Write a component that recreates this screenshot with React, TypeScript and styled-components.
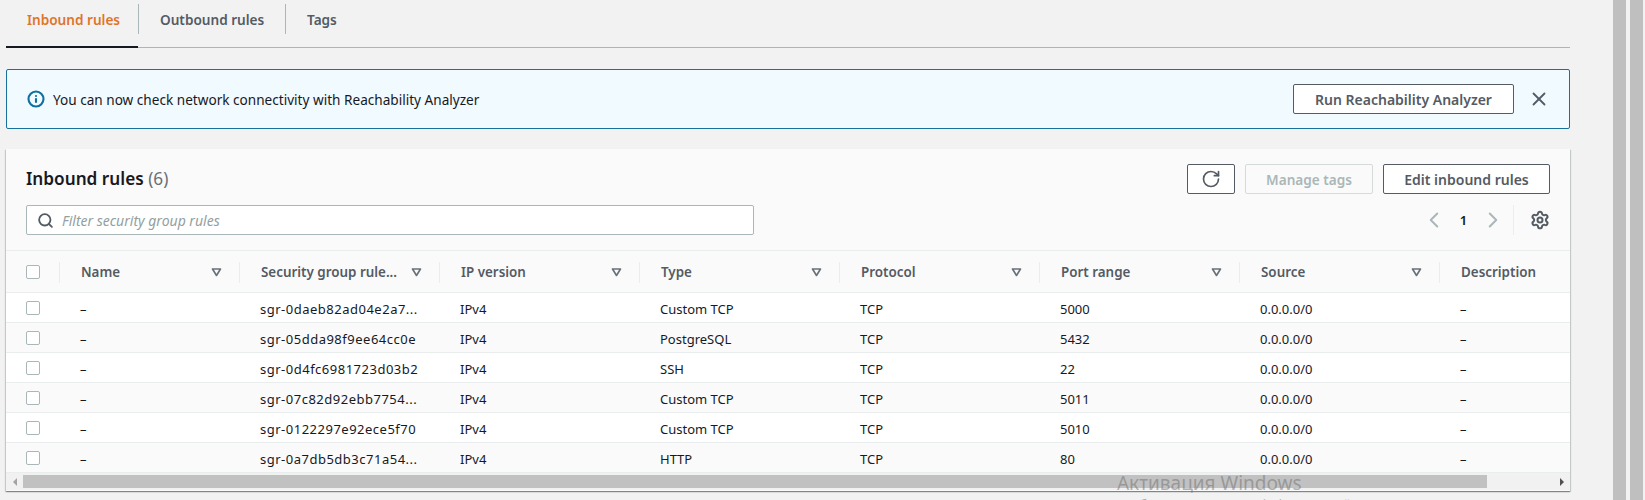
import React from 'react';
import styled, { createGlobalStyle } from 'styled-components';
import { X, RotateCw, ChevronLeft, ChevronRight, Settings, Search, Info } from 'lucide-react';

const GlobalStyle = createGlobalStyle`
  html, body {
    margin: 0;
    padding: 0;
    background: #f2f2f2;
    overflow: hidden;
  }
  body {
    font-family: "Noto Sans", "Open Sans", sans-serif;
    font-size: 14px;
    color: #16191f;
  }
`;

const Page = styled.div`
  position: relative;
  display: flex;
  width: 1645px;
  height: 500px;
  overflow: hidden;
`;

const Content = styled.div`
  width: 1564px;
  margin-left: 6px;
  flex: none;
`;

const Gutter = styled.div`
  display: flex;
  gap: 4px;
  margin-left: 43px;
  flex: none;
`;

const Track = styled.div`
  width: 13px;
  height: 500px;
  background: #bfbfbf;
`;

const Tabs = styled.div`
  display: flex;
  height: 48px;
  border-bottom: 1px solid #aab7b8;
  box-sizing: border-box;
`;

const Tab = styled.div<{ $active?: boolean; $width: number }>`
  box-sizing: border-box;
  width: ${p => p.$width}px;
  height: 48px;
  padding: 10px 0 0 21px;
  font-weight: 600;
  font-size: 13.6px;
  line-height: 20px;
  color: ${p => (p.$active ? '#e0742a' : '#545b64')};
  border-bottom: ${p => (p.$active ? '2px solid #16191f' : 'none')};
`;

const TabSep = styled.div`
  width: 1px;
  height: 30px;
  margin-top: 4px;
  background: #aab7b8;
`;

const Alert = styled.div`
  box-sizing: border-box;
  display: flex;
  align-items: center;
  height: 60px;
  margin-top: 21px;
  padding: 0 19px 0 20px;
  background: #f1faff;
  border: 1px solid #16719c;
  border-radius: 2px;
`;

const AlertText = styled.span`
  margin-left: 8px;
  padding-top: 1px;
  flex: 1;
  font-size: 13.6px;
  line-height: 20px;
`;

const Btn = styled.button<{ $width: number; $disabled?: boolean }>`
  box-sizing: border-box;
  display: flex;
  align-items: center;
  justify-content: center;
  flex: none;
  width: ${p => p.$width}px;
  height: 30px;
  padding: 0;
  font-family: inherit;
  font-size: ${p => (p.$disabled ? 13.6 : 14)}px;
  font-weight: 600;
  border-radius: 2px;
  background: ${p => (p.$disabled ? '#fafafa' : '#ffffff')};
  color: ${p => (p.$disabled ? '#aab7b8' : '#545b64')};
  border: 1px solid ${p => (p.$disabled ? '#d5dbdb' : '#545b64')};
`;

const CloseIcon = styled(X)`
  flex: none;
  margin-left: 14px;
  color: #545b64;
`;

const Card = styled.div`
  position: relative;
  margin-top: 20px;
  background: #fafafa;
  box-shadow: 0 1px 1px 0 rgba(0, 28, 36, 0.3), 1px 1px 1px 0 rgba(0, 28, 36, 0.15), -1px 1px 1px 0 rgba(0, 28, 36, 0.15);
  height: 342px;
`;

const CardHead = styled.div`
  box-sizing: border-box;
  height: 102px;
  padding: 15px 20px 0 20px;
  border-bottom: 1px solid #eaeded;
`;

const TitleRow = styled.div`
  display: flex;
  align-items: center;
  gap: 10px;
  height: 30px;
`;

const Title = styled.h2`
  flex: 1;
  margin: 0;
  font-size: 17.2px;
  line-height: 30px;
  font-weight: 600;
`;

const Count = styled.span`
  font-weight: 400;
  color: #687078;
`;

const FilterRow = styled.div`
  display: flex;
  align-items: center;
  height: 30px;
  margin-top: 11px;
`;

const Filter = styled.div`
  box-sizing: border-box;
  display: flex;
  align-items: center;
  width: 728px;
  height: 30px;
  padding-left: 10px;
  background: #ffffff;
  border: 1px solid #aab7b8;
  border-radius: 2px;
  color: #545b64;
`;

const Placeholder = styled.span`
  margin-left: 8px;
  font-style: italic;
  font-size: 14px;
  color: #93a0a1;
`;

const Pager = styled.div`
  display: flex;
  align-items: center;
  margin-left: auto;
  height: 30px;
`;

const PageNo = styled.span`
  width: 33px;
  text-align: center;
  font-size: 13px;
  font-weight: 600;
`;

const PagerSep = styled.div`
  width: 1px;
  height: 30px;
  margin: 0 16px 0 7px;
  background: #eaeded;
`;

const Grid = styled.div`
  overflow: hidden;
`;

const Row = styled.div<{ $head?: boolean; $alt?: boolean }>`
  display: flex;
  box-sizing: border-box;
  width: 1640px;
  height: ${p => (p.$head ? 42 : 30)}px;
  align-items: center;
  background: ${p => (p.$alt ? '#fafafa' : p.$head ? '#fafafa' : '#ffffff')};
  border-bottom: 1px solid #eaeded;
  color: #16191f;
`;

const Cell = styled.div<{ $width: number; $head?: boolean; $wide?: boolean }>`
  position: relative;
  box-sizing: border-box;
  flex: none;
  display: flex;
  align-items: center;
  width: ${p => p.$width}px;
  height: 100%;
  padding: ${p => (p.$head ? '0 0 0 21px' : '2px 0 0 20px')};
  font-size: ${p => (p.$head ? 13.4 : 13)}px;
  white-space: nowrap;
  letter-spacing: ${p => (p.$wide ? '0.5px' : 'normal')};
  ${p => (p.$head ? 'font-weight: 600; color: #545b64;' : '')}
`;

const CheckCell = styled(Cell)`
  padding: 0 0 0 20px;
`;

const HeadSep = styled.div`
  position: absolute;
  right: 0;
  top: 11px;
  width: 1px;
  height: 21px;
  background: #eaeded;
`;

const Check = styled.div`
  box-sizing: border-box;
  width: 14px;
  height: 14px;
  background: #ffffff;
  border: 1px solid #aab7b8;
  border-radius: 2px;
`;

const Sort = styled.svg`
  position: absolute;
  right: 18px;
  top: 16px;
`;

const Scrollbar = styled.div`
  display: flex;
  align-items: center;
  height: 17px;
  background: #f1f1f1;
`;

const Arrow = styled.div<{ $dir: 'left' | 'right' }>`
  flex: none;
  width: 17px;
  height: 15px;
  display: flex;
  align-items: center;
  justify-content: center;
  &::before {
    content: '';
    border-top: 4px solid transparent;
    border-bottom: 4px solid transparent;
    ${p => (p.$dir === 'left' ? 'border-right: 4px solid #a3a3a3;' : 'border-left: 4px solid #505050;')}
  }
`;

const Thumb = styled.div`
  width: 1464px;
  height: 13px;
  background: #c1c1c1;
`;

const Spacer = styled.div`
  flex: 1;
`;

const Watermark = styled.div`
  position: absolute;
  left: 1117px;
  top: 471px;
  color: rgba(110, 110, 110, 0.5);
  font-family: "Noto Sans", sans-serif;
`;

const WmTitle = styled.div`
  font-size: 19px;
  line-height: 24px;
`;

const WmSub = styled.div`
  font-size: 13px;
  line-height: 18px;
  white-space: nowrap;
`;

const SortIcon = () => (
  <Sort width="11" height="10" viewBox="0 0 11 10">
    <path d="M1.5 2h8L5.5 8.5z" fill="none" stroke="#687078" strokeWidth="1.6" strokeLinejoin="round" />
  </Sort>
);

const columns = [
  { title: 'Name', width: 180 },
  { title: 'Security group rule...', width: 200 },
  { title: 'IP version', width: 200 },
  { title: 'Type', width: 200 },
  { title: 'Protocol', width: 200 },
  { title: 'Port range', width: 200 },
  { title: 'Source', width: 200 },
  { title: 'Description', width: 200 },
];

const rules = [
  ['–', 'sgr-0daeb82ad04e2a7...', 'IPv4', 'Custom TCP', 'TCP', '5000', '0.0.0.0/0', '–'],
  ['–', 'sgr-05dda98f9ee64cc0e', 'IPv4', 'PostgreSQL', 'TCP', '5432', '0.0.0.0/0', '–'],
  ['–', 'sgr-0d4fc6981723d03b2', 'IPv4', 'SSH', 'TCP', '22', '0.0.0.0/0', '–'],
  ['–', 'sgr-07c82d92ebb7754...', 'IPv4', 'Custom TCP', 'TCP', '5011', '0.0.0.0/0', '–'],
  ['–', 'sgr-0122297e92ece5f70', 'IPv4', 'Custom TCP', 'TCP', '5010', '0.0.0.0/0', '–'],
  ['–', 'sgr-0a7db5db3c71a54...', 'IPv4', 'HTTP', 'TCP', '80', '0.0.0.0/0', '–'],
];

const App: React.FC = () => (
  <Page>
    <GlobalStyle />
    <Content>
      <Tabs>
        <Tab $active $width={132}>Inbound rules</Tab>
        <TabSep />
        <Tab $width={146}>Outbound rules</Tab>
        <TabSep />
        <Tab $width={80}>Tags</Tab>
      </Tabs>
      <Alert>
        <Info size={18} color="#0f6f9f" strokeWidth={2.8} />
        <AlertText>You can now check network connectivity with Reachability Analyzer</AlertText>
        <Btn $width={221}>Run Reachability Analyzer</Btn>
        <CloseIcon size={22} strokeWidth={2} />
      </Alert>
      <Card>
        <CardHead>
          <TitleRow>
            <Title>Inbound rules <Count>(6)</Count></Title>
            <Btn $width={48}><RotateCw size={20} /></Btn>
            <Btn $width={128} $disabled>Manage tags</Btn>
            <Btn $width={167}>Edit inbound rules</Btn>
          </TitleRow>
          <FilterRow>
            <Filter>
              <Search size={17} strokeWidth={2.6} />
              <Placeholder>Filter security group rules</Placeholder>
            </Filter>
            <Pager>
              <ChevronLeft size={26} color="#aab7b8" strokeWidth={1.8} />
              <PageNo>1</PageNo>
              <ChevronRight size={26} color="#aab7b8" strokeWidth={1.8} />
              <PagerSep />
              <Settings size={20} color="#545b64" strokeWidth={2.4} />
            </Pager>
          </FilterRow>
        </CardHead>
        <Grid>
          <Row $head>
            <CheckCell $width={54}><Check /><HeadSep /></CheckCell>
            {columns.map((col, i) => (
              <Cell key={col.title} $head $width={col.width}>
                {col.title}
                {i < columns.length - 1 && <SortIcon />}
                {i < columns.length - 1 && <HeadSep />}
              </Cell>
            ))}
          </Row>
          {rules.map((rule, r) => (
            <Row key={rule[1]} $alt={r % 2 === 1}>
              <CheckCell $width={54}><Check /></CheckCell>
              {rule.map((value, i) => (
                <Cell key={i} $width={columns[i].width} $wide={i === 1}>{value}</Cell>
              ))}
            </Row>
          ))}
        </Grid>
        <Scrollbar>
          <Arrow $dir="left" />
          <Thumb />
          <Spacer />
          <Arrow $dir="right" />
        </Scrollbar>
      </Card>
    </Content>
    <Gutter>
      <Track />
      <Track />
    </Gutter>
    <Watermark>
      <WmTitle>Активация Windows</WmTitle>
      <WmSub>Чтобы активировать Windows, перейдите в раздел "Параметры".</WmSub>
    </Watermark>
  </Page>
);

export default App;
